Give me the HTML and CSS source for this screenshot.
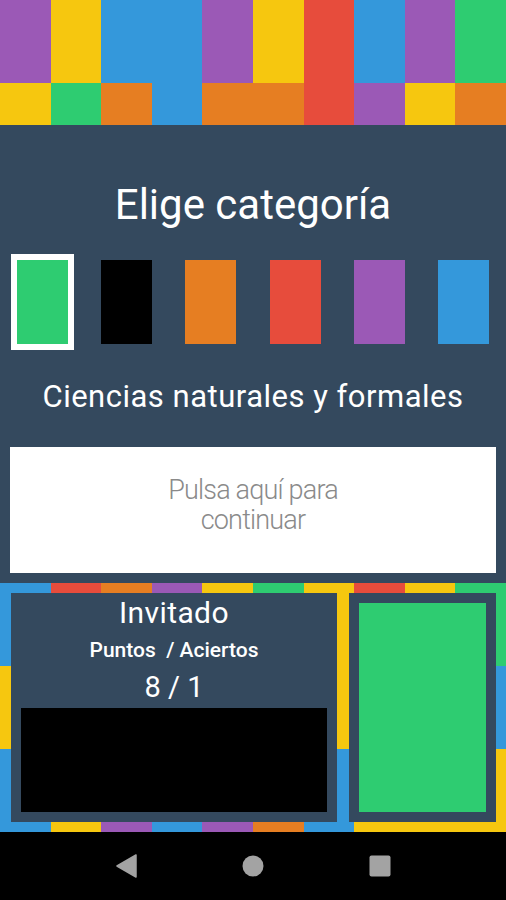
FILE: index.html
```html
<!DOCTYPE html>
<html lang="es">
<head>
<meta charset="utf-8">
<title>Elige categoría</title>
<link rel="stylesheet" href="styles.css">
</head>
<body>
<div class="app">
  <header class="mosaic">
    <div class="tile purple"></div>
    <div class="tile yellow"></div>
    <div class="tile blue"></div>
    <div class="tile blue tall"></div>
    <div class="tile purple"></div>
    <div class="tile yellow"></div>
    <div class="tile red tall"></div>
    <div class="tile blue"></div>
    <div class="tile purple"></div>
    <div class="tile green"></div>
    <div class="tile yellow"></div>
    <div class="tile green"></div>
    <div class="tile orange"></div>
    <div class="tile orange"></div>
    <div class="tile orange"></div>
    <div class="tile purple"></div>
    <div class="tile yellow"></div>
    <div class="tile orange"></div>
  </header>

  <main class="chooser">
    <h1 class="title">Elige categoría</h1>
    <div class="swatches">
      <div class="slot"><div class="swatch green selected"></div></div>
      <div class="slot"><div class="swatch black"></div></div>
      <div class="slot"><div class="swatch orange"></div></div>
      <div class="slot"><div class="swatch red"></div></div>
      <div class="slot"><div class="swatch purple"></div></div>
      <div class="slot"><div class="swatch blue"></div></div>
    </div>
    <p class="category">Ciencias naturales y formales</p>
    <button class="continue" type="button">Pulsa aquí para<br>continuar</button>
  </main>

  <section class="board">
    <div class="board-tiles">
      <div class="tile blue"></div>
      <div class="tile red"></div>
      <div class="tile orange"></div>
      <div class="tile purple"></div>
      <div class="tile yellow"></div>
      <div class="tile green"></div>
      <div class="tile yellow"></div>
      <div class="tile red"></div>
      <div class="tile yellow"></div>
      <div class="tile green"></div>

      <div class="tile yellow"></div>
      <div class="tile green"></div>
      <div class="tile blue"></div>
      <div class="tile orange"></div>
      <div class="tile purple"></div>
      <div class="tile red"></div>
      <div class="tile yellow"></div>
      <div class="tile green"></div>
      <div class="tile purple"></div>
      <div class="tile blue"></div>

      <div class="tile blue"></div>
      <div class="tile yellow"></div>
      <div class="tile purple"></div>
      <div class="tile blue"></div>
      <div class="tile purple"></div>
      <div class="tile orange"></div>
      <div class="tile blue"></div>
      <div class="tile yellow"></div>
      <div class="tile yellow"></div>
      <div class="tile yellow"></div>
    </div>
    <div class="board-panels">
      <div class="player">
        <div class="player-name">Invitado</div>
        <div class="player-label">Puntos &nbsp;/ Aciertos</div>
        <div class="player-score">8 / 1</div>
        <div class="player-screen"></div>
      </div>
      <div class="current">
        <div class="current-fill"></div>
      </div>
    </div>
  </section>

  <nav class="sysbar">
    <svg class="nav-icon" width="22" height="24" viewBox="0 0 22 24"><path d="M21 1 L21 23 L2 12 Z" fill="#a3a3a3" stroke="#a3a3a3" stroke-width="1.5" stroke-linejoin="round"/></svg>
    <svg class="nav-icon" width="22" height="22" viewBox="0 0 22 22"><circle cx="11" cy="11" r="10.5" fill="#a3a3a3"/></svg>
    <svg class="nav-icon" width="22" height="22" viewBox="0 0 22 22"><rect x="0.5" y="0.5" width="21" height="21" rx="2" fill="#a3a3a3"/></svg>
  </nav>
</div>
</body>
</html>
```

FILE: styles.css
```css
* { box-sizing: border-box; }

html, body {
  margin: 0;
  padding: 0;
  background: #000;
}

.app {
  width: 506px;
  height: 900px;
  display: flex;
  flex-direction: column;
  font-family: Roboto, "Noto Sans", sans-serif;
  background: #34495e;
  overflow: hidden;
}

.purple { background: #9b59b6; }
.yellow { background: #f6c70f; }
.blue { background: #3498db; }
.red { background: #e74c3c; }
.green { background: #2ecc71; }
.orange { background: #e67e22; }
.black { background: #000; }

/* top mosaic */
.mosaic {
  height: 125px;
  display: grid;
  grid-template-columns: repeat(10, 1fr);
  grid-template-rows: 83px 42px;
  grid-auto-flow: row dense;
}
.mosaic .tall { grid-row: span 2; }

/* chooser */
.chooser {
  height: 458px;
  display: flex;
  flex-direction: column;
  padding: 57px 0 10px;
}

.title {
  margin: 0;
  font-size: 42px;
  line-height: 46px;
  font-weight: 400;
  color: #fff;
  text-align: center;
}

.swatches {
  margin-top: 27px;
  display: grid;
  grid-template-columns: repeat(6, 1fr);
  padding: 5px 0;
}
.slot {
  display: flex;
  justify-content: center;
}
.swatch {
  width: 51px;
  height: 84px;
}
.swatch.selected {
  outline: 6px solid #fff;
}

.category {
  margin: 31px 0 0;
  font-size: 31px;
  line-height: 34px;
  letter-spacing: 0.5px;
  color: #fff;
  text-align: center;
}

.continue {
  margin: 33px 10px 0 10px;
  height: 126px;
  border: 0;
  background: #fff;
  font-family: Roboto, "Noto Sans", sans-serif;
  font-weight: 300;
  font-size: 27px;
  line-height: 30px;
  color: #8a8a8a;
  padding: 0 0 10px;
  text-align: center;
  letter-spacing: -0.8px;
}

/* bottom board */
.board {
  height: 249px;
  display: grid;
}
.board-tiles,
.board-panels {
  grid-area: 1 / 1;
}
.board-tiles {
  display: grid;
  grid-template-columns: repeat(10, 1fr);
  grid-template-rows: repeat(3, 83px);
}
.board-panels {
  display: flex;
  gap: 12px;
  padding: 10px 10px 10px 11px;
}

.player {
  width: 326px;
  background: #34495e;
  display: flex;
  flex-direction: column;
  align-items: center;
  padding: 0 10px 10px;
  color: #fff;
}
.player-name {
  font-size: 30px;
  line-height: 40px;
  letter-spacing: 0.4px;
}
.player-label {
  font-size: 21px;
  line-height: 34px;
  font-weight: 500;
}
.player-score {
  font-size: 29px;
  line-height: 40px;
}
.player-screen {
  margin-top: 1px;
  align-self: stretch;
  flex: 1;
  background: #000;
}

.current {
  flex: 1;
  background: #34495e;
  padding: 10px;
  display: flex;
}
.current-fill {
  flex: 1;
  background: #2ecc71;
}

/* system nav bar */
.sysbar {
  flex: 1;
  background: #000;
  display: flex;
  align-items: center;
  justify-content: space-between;
  padding: 0 115px 0 115px;
}
.nav-icon { display: block; }
```
